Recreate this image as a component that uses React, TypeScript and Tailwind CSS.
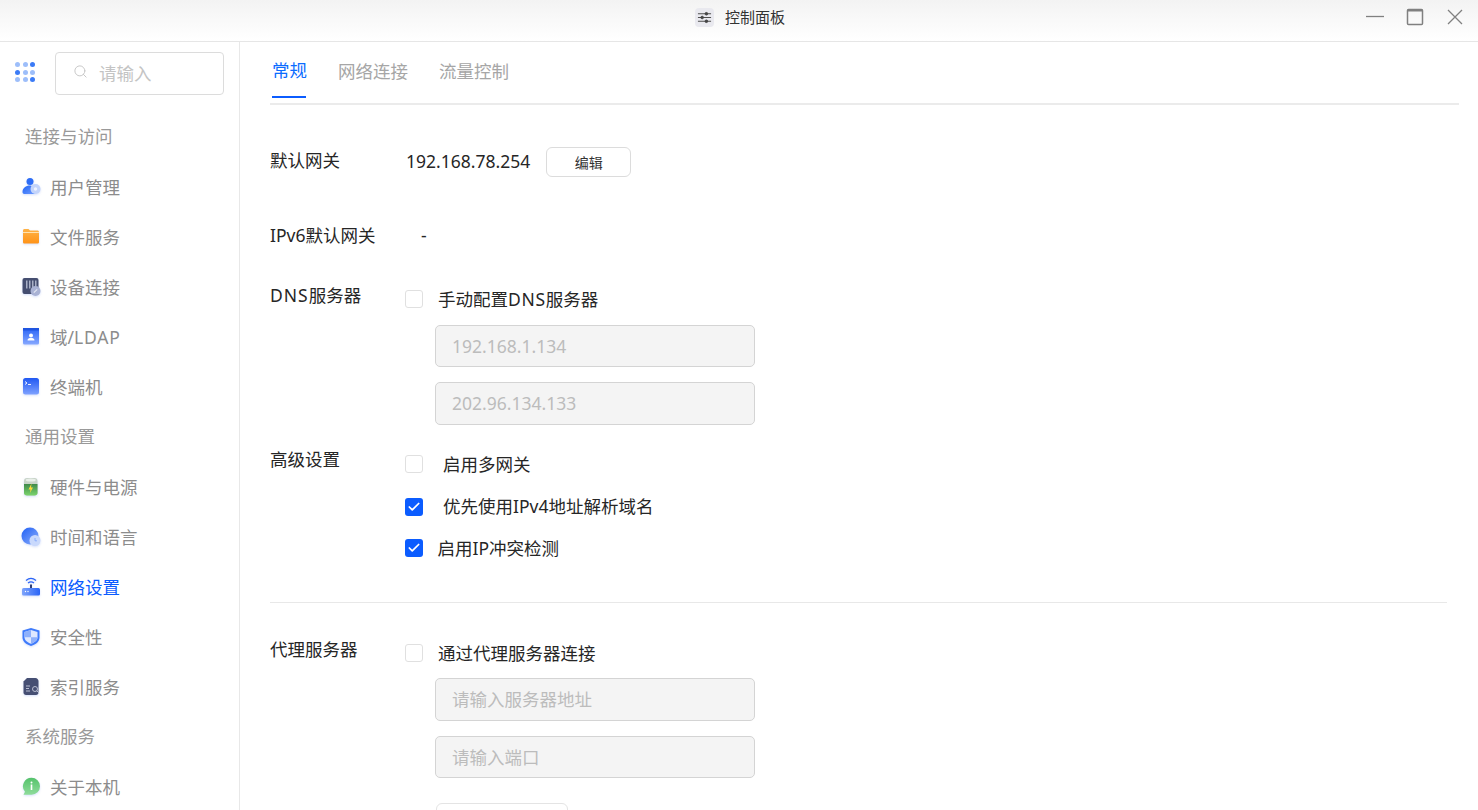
import type { ReactNode } from 'react'
import { Check, Search } from 'lucide-react'

const font = "font-['Noto_Sans','Noto_Sans_CJK_SC',sans-serif]"

function IconBox({ children }: { children: ReactNode }) {
  return (
    <svg viewBox="0 0 20 20" className="w-[20px] h-[20px] shrink-0 mr-[9px] drop-shadow-[0_1px_1px_rgba(90,130,240,0.25)]">
      {children}
    </svg>
  )
}

const UserIcon = (
  <IconBox>
    <defs>
      <linearGradient id="u1" x1="0" y1="0" x2="1" y2="1">
        <stop offset="0" stopColor="#1f63f5" />
        <stop offset="1" stopColor="#6f9cff" />
      </linearGradient>
    </defs>
    <circle cx="9" cy="4.500" r="3.500" fill="#2d6df6" />
    <path d="M1.500 15c0-4 3.500-6.500 7.500-6.500 2 0 3 1 3 3.500s1 3.500 2 5H4c-1.500 0-2.500-.5-2.500-2z" fill="url(#u1)" />
    <circle cx="14.500" cy="12" r="5" fill="#c3d4fb" />
    <circle cx="14.500" cy="12" r="1.700" fill="#eef3ff" />
  </IconBox>
)

const FolderIcon = (
  <IconBox>
    <defs>
      <linearGradient id="f1" x1="0" y1="0" x2="0" y2="1">
        <stop offset="0" stopColor="#ffb347" />
        <stop offset="1" stopColor="#ff9318" />
      </linearGradient>
    </defs>
    <path d="M2 3.500C2 2.700 2.700 2 3.500 2h4L9 3.500h7.500c.8 0 1.500.7 1.500 1.500v10c0 1-.7 1.500-1.500 1.500h-13C2.700 16.500 2 16 2 15z" fill="url(#f1)" />
    <rect x="2" y="5" width="16" height="1" fill="#ffe3b0" />
  </IconBox>
)

const DeviceIcon = (
  <IconBox>
    <rect x="1.500" y="1" width="16" height="16" rx="2" fill="#454e70" />
    <path d="M5 3.500h1.500v8H5zM8 3.500h1.500v8H8zM11 3.500h1.500v8H11zM14 3.500h1.500v6H14z" fill="#a8afc6" />
    <circle cx="14.500" cy="14" r="5" fill="#a9b2d4" />
    <path d="M12.800 15.700l3.400-3.400" stroke="#e3e7f3" strokeWidth="1.200" />
  </IconBox>
)

const LdapIcon = (
  <IconBox>
    <defs>
      <linearGradient id="l1" x1="0" y1="0" x2="0" y2="1">
        <stop offset="0" stopColor="#2a64f6" />
        <stop offset="1" stopColor="#86a8ff" />
      </linearGradient>
    </defs>
    <rect x="2" y="1" width="16" height="16.500" rx="1.500" fill="url(#l1)" />
    <rect x="2" y="1" width="16" height="2.500" fill="#1f55e0" />
    <circle cx="10" cy="8.500" r="2" fill="#fff" />
    <path d="M6.500 13.500c0-2 1.500-2.500 3.500-2.500s3.500.5 3.500 2.500z" fill="#fff" />
  </IconBox>
)

const TerminalIcon = (
  <IconBox>
    <defs>
      <linearGradient id="t1" x1="0" y1="0" x2="0" y2="1">
        <stop offset="0" stopColor="#2058f2" />
        <stop offset="1" stopColor="#7fa2ff" />
      </linearGradient>
    </defs>
    <rect x="2" y="1" width="16" height="16.500" rx="2.500" fill="url(#t1)" />
    <path d="M4 4.500l2 1.500L4 7.500" stroke="#fff" strokeWidth="0.900" fill="none" />
    <path d="M7 7.500h3" stroke="#fff" strokeWidth="0.900" />
  </IconBox>
)

const BatteryIcon = (
  <IconBox>
    <defs>
      <linearGradient id="b1" x1="0" y1="0" x2="0" y2="1">
        <stop offset="0" stopColor="#3f8a4a" />
        <stop offset="1" stopColor="#7bd46d" />
      </linearGradient>
    </defs>
    <rect x="3" y="1" width="13.500" height="17.500" rx="3" fill="#c8d4c8" />
    <ellipse cx="9.750" cy="3" rx="5" ry="1.500" fill="#e9efe9" />
    <path d="M3 7h13.500v9c0 1.500-1.200 2.500-3 2.500H6c-1.800 0-3-1-3-2.500z" fill="url(#b1)" />
    <path d="M10.500 6.500L7.500 12.500H9.500L9 16l3-5.500h-2z" fill="#ffd83b" />
  </IconBox>
)

const GlobeIcon = (
  <IconBox>
    <defs>
      <linearGradient id="g1" x1="0" y1="0" x2="1" y2="1">
        <stop offset="0" stopColor="#1f5ff5" />
        <stop offset="1" stopColor="#8fb0fb" />
      </linearGradient>
    </defs>
    <circle cx="9" cy="9" r="8.500" fill="url(#g1)" />
    <circle cx="14" cy="13.500" r="5.500" fill="#c9d9fc" />
    <path d="M14 11v2.800h2" stroke="#7ea4fb" strokeWidth="0.800" fill="none" />
  </IconBox>
)

const RouterIcon = (
  <IconBox>
    <defs>
      <linearGradient id="r1" x1="0" y1="0" x2="1" y2="0">
        <stop offset="0" stopColor="#7ea4fb" />
        <stop offset="1" stopColor="#2a64f6" />
      </linearGradient>
    </defs>
    <path d="M5 3.500c3-2.500 7-2.500 10 0" stroke="#2a64f6" strokeWidth="1.300" fill="none" />
    <path d="M7 6c2-1.500 4-1.500 6 0" stroke="#2a64f6" strokeWidth="1.300" fill="none" />
    <rect x="9" y="7.500" width="2" height="4" fill="#2f3f74" />
    <rect x="1" y="11" width="18" height="7.500" rx="1.500" fill="url(#r1)" />
    <circle cx="4.500" cy="14.500" r="0.700" fill="#fff" />
    <circle cx="7" cy="14.500" r="0.700" fill="#fff" />
  </IconBox>
)

const ShieldIcon = (
  <IconBox>
    <path d="M10 1L18.500 3.500v7c0 4-3.500 7-8.500 8.500-5-1.500-8.500-4.500-8.500-8.500v-7z" fill="#3f7bfb" />
    <path d="M10 3L16.500 5v5.300c0 3-2.500 5-6.500 6.500-4-1.500-6.500-3.500-6.500-6.500V5z" fill="#dfe8ff" />
    <path d="M10 3L3.500 5v5.300H10zM10 10.300h6.500c0 3-2.500 5-6.500 6.500z" fill="#8eb0fb" />
  </IconBox>
)

const IndexIcon = (
  <IconBox>
    <path d="M6 1h8.500c1.500 0 3 1.500 3 3v11.500c0 1.500-1 2.500-2.500 2.500H5c-1.500 0-2.500-1-2.500-2.500V4.500z" fill="#464f73" />
    <path d="M5 9h4M5 11.500h3M5 14h4" stroke="#c5cadb" strokeWidth="0.900" />
    <circle cx="14" cy="12" r="2.500" fill="#464f73" stroke="#c5cadb" strokeWidth="0.900" />
    <path d="M15.800 13.800l2.200 2.200" stroke="#c5cadb" strokeWidth="0.900" />
  </IconBox>
)

const InfoIcon = (
  <IconBox>
    <defs>
      <linearGradient id="i1" x1="0" y1="0" x2="0" y2="1">
        <stop offset="0" stopColor="#55c26b" />
        <stop offset="1" stopColor="#8fdc9b" />
      </linearGradient>
    </defs>
    <path d="M10.500.8a8.500 8.500 0 0 1 0 17H2.500l1.500-3A8.500 8.500 0 0 1 10.500.8z" fill="url(#i1)" />
    <circle cx="10.500" cy="5.500" r="1" fill="#fff" />
    <rect x="9.700" y="7.500" width="1.600" height="5.500" fill="#fff" />
  </IconBox>
)

type NavItem = { label: ReactNode; key: string; icon?: ReactNode; active?: boolean }

const nav: NavItem[] = [
  { key: 'access', label: '连接与访问' },
  { key: 'user', label: '用户管理', icon: UserIcon },
  { key: 'file', label: '文件服务', icon: FolderIcon },
  { key: 'device', label: '设备连接', icon: DeviceIcon },
  { key: 'ldap', label: <>域/<span className="tracking-[0.8px]">LDAP</span></>, icon: LdapIcon },
  { key: 'term', label: '终端机', icon: TerminalIcon },
  { key: 'general', label: '通用设置' },
  { key: 'hw', label: '硬件与电源', icon: BatteryIcon },
  { key: 'time', label: '时间和语言', icon: GlobeIcon },
  { key: 'net', label: '网络设置', icon: RouterIcon, active: true },
  { key: 'sec', label: '安全性', icon: ShieldIcon },
  { key: 'index', label: '索引服务', icon: IndexIcon },
  { key: 'system', label: '系统服务' },
  { key: 'about', label: '关于本机', icon: InfoIcon },
]

function AppsDots() {
  const dark = [2, 3, 8]
  return (
    <div className="grid grid-cols-3 gap-[2.500px] w-[20px] shrink-0 mt-[10px]">
      {[0, 1, 2, 3, 4, 5, 6, 7, 8].map((i) => (
        <span
          key={i}
          className={
            dark.includes(i)
              ? 'w-[5px] h-[5px] rounded-full bg-[#3b7bf6]'
              : 'w-[5px] h-[5px] rounded-full bg-[#9dbefa]'
          }
        />
      ))}
    </div>
  )
}

function Box({ checked }: { checked?: boolean }) {
  if (checked) {
    return (
      <span className="w-[18px] h-[18px] rounded-[3px] bg-[#0b5cff] flex items-center justify-center shrink-0">
        <Check className="w-[14px] h-[14px] text-white" strokeWidth={3} />
      </span>
    )
  }
  return <span className="w-[18px] h-[18px] rounded-[3px] border border-[#e0e0e0] bg-white shrink-0" />
}

function Field({ text, short }: { text: string; short?: boolean }) {
  return (
    <div
      className={
        short
          ? 'w-[320px] h-[42px] ml-[30px] pl-[16px] flex items-center rounded-[5px] border border-[#d4d4d4] bg-[#f4f4f4] text-[17.500px] text-[#bcbcbc]'
          : 'w-[320px] h-[43px] ml-[30px] pl-[16px] flex items-center rounded-[5px] border border-[#d4d4d4] bg-[#f4f4f4] text-[17.500px] text-[#bcbcbc]'
      }
    >
      {text}
    </div>
  )
}

const Dns = () => <span className="tracking-[1px]">DNS</span>

export default function App() {
  return (
    <div className={`${font} h-[810px] w-[1478px] overflow-hidden bg-white flex flex-col`}>
      <header className="h-[42px] shrink-0 border-b border-[#e6e6e6] bg-gradient-to-b from-[#f3f3f3] to-white flex items-center relative">
        <div className="flex-1 flex items-center justify-center gap-[11px] pb-[7px] pl-[2px]">
          <span className="w-[19px] h-[19px] rounded-[4px] bg-[#e9e9ef] flex items-center justify-center">
            <svg viewBox="0 0 16 16" className="w-[15px] h-[15px]" stroke="#444" strokeWidth="1" fill="#444">
              <path d="M1 4h14M1 8h14M1 12h14" />
              <circle cx="10" cy="4" r="1.400" />
              <circle cx="5.500" cy="8" r="1.400" />
              <circle cx="10" cy="12" r="1.400" />
            </svg>
          </span>
          <span className="text-[15px] text-[#333]">控制面板</span>
        </div>
        <div className="absolute right-[14px] top-[8px] flex items-center text-[#808080]">
          <svg viewBox="0 0 18 18" className="w-[18px] h-[18px]" stroke="currentColor" strokeWidth="1.300" fill="none">
            <path d="M0 8.500h18" />
          </svg>
          <svg viewBox="0 0 18 18" className="w-[18px] h-[18px] ml-[22px]" stroke="currentColor" strokeWidth="1.500" fill="none">
            <rect x="1.500" y="1.500" width="15" height="15" rx="1" />
            <path d="M1.500 2.500h15" strokeWidth="2" />
          </svg>
          <svg viewBox="0 0 18 18" className="w-[18px] h-[18px] ml-[22px]" stroke="currentColor" strokeWidth="1.300" fill="none">
            <path d="M2 2l14 14M16 2L2 16" />
          </svg>
        </div>
      </header>

      <div className="flex flex-1 min-h-0">
        <aside className="w-[240px] shrink-0 border-r border-[#e8e8e8]">
          <div className="h-[70px] flex items-start pt-[10px] pl-[15px] pr-[15px] gap-[20px]">
            <AppsDots />
            <div className="flex-1 h-[43px] rounded-[4px] border border-[#dcdcdc] flex items-center pl-[17px] gap-[11px] text-[#c4c4c4]">
              <Search className="w-[15px] h-[15px] mb-[4px]" strokeWidth={1.500} />
              <span className="text-[17.500px]">请输入</span>
            </div>
          </div>
          <nav>
            {nav.map((item) => (
              <div key={item.key} className="h-[50px] flex items-center pl-[21px]">
                {item.icon ? item.icon : <span className="w-[4px]" />}
                <span
                  className={
                    item.active
                      ? 'text-[17.500px] text-[#0b5cff]'
                      : item.icon
                        ? 'text-[17.500px] text-[#8c8c8c]'
                        : 'text-[17.500px] text-[#999] mb-[2px]'
                  }
                >
                  {item.label}
                </span>
              </div>
            ))}
          </nav>
        </aside>

        <main className="flex-1 pl-[30px] pr-[20px] text-[17.500px] text-[#262626]">
          <div className="flex gap-[32px] h-[63px] border-b-2 border-[#ebebeb] pl-[2px] mr-[-1px]">
            <div className="h-[56px] w-[34px] pt-[2px] flex items-center whitespace-nowrap text-[#0b6cff] border-b-2 border-[#0b5cff]">常规</div>
            <div className="h-[56px] pt-[2px] flex items-center text-[#a6a6a6]">网络连接</div>
            <div className="h-[56px] pt-[2px] ml-[-1px] flex items-center text-[#a6a6a6]">流量控制</div>
          </div>

          <div className="flex h-[30px] items-center mt-[42px]">
            <span className="w-[136px] mb-[3px]">默认网关</span>
            <span className="mb-[1px]">192.168.78.254</span>
            <button className="ml-[16px] w-[85px] h-[30px] rounded-[6px] border border-[#dcdcdc] text-[14px] text-[#333]">
              编辑
            </button>
          </div>

          <div className="flex h-[26px] items-center mt-[45px]">
            <span className="w-[151px]">IPv6默认网关</span>
            <span>-</span>
          </div>

          <div className="flex mt-[35px]">
            <span className="w-[135px] leading-[24px]"><Dns />服务器</span>
            <div>
              <div className="flex items-center gap-[15px] h-[26px] mt-[3px]">
                <Box />
                <span>手动配置<span className="tracking-[0.7px]">DNS</span>服务器</span>
              </div>
              <div className="mt-[13px] flex flex-col gap-[15px]">
                <Field text="192.168.1.134" short />
                <Field text="202.96.134.133" />
              </div>
            </div>
          </div>

          <div className="flex mt-[21px]">
            <span className="w-[135px] leading-[26px]">高级设置</span>
            <div className="flex flex-col gap-[16px]">
              <div className="flex items-center gap-[20px] h-[26px] mt-[5px]">
                <Box />
                <span>启用多网关</span>
              </div>
              <div className="flex items-center gap-[20px] h-[26px]">
                <span className="pt-[2px]">
                  <Box checked />
                </span>
                <span>优先使用IPv4地址解析域名</span>
              </div>
              <div className="flex items-center gap-[14.500px] h-[26px]">
                <Box checked />
                <span>启用IP冲突检测</span>
              </div>
            </div>
          </div>

          <div className="border-t border-[#e8e8e8] mt-[41px] mr-[11px]" />

          <div className="flex mt-[33px]">
            <span className="w-[135px] leading-[26px]">代理服务器</span>
            <div>
              <div className="flex items-center gap-[15px] h-[26px] mt-[4px]">
                <Box />
                <span>通过代理服务器连接</span>
              </div>
              <div className="mt-[12px] flex flex-col gap-[15px]">
                <Field text="请输入服务器地址" />
                <Field text="请输入端口" short />
              </div>
              <div className="ml-[31px] mt-[25px] w-[132px] h-[30px] rounded-[6px] border border-[#e4e4e4]" />
            </div>
          </div>
        </main>
      </div>
    </div>
  )
}
